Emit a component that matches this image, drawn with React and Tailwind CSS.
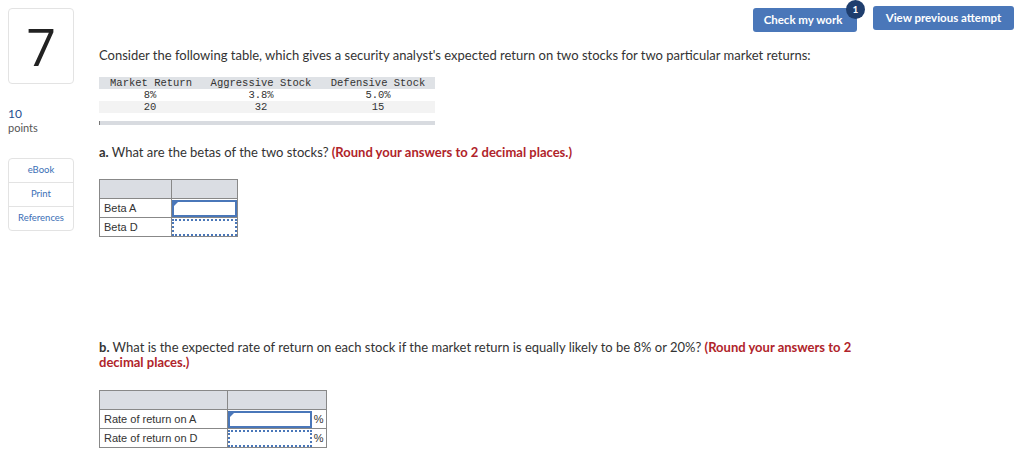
import React from "react";

const sans = { fontFamily: "Lato, 'Open Sans', sans-serif" };

export default function App() {
  return (
    <div className="relative w-[1024px] h-[458px] bg-white text-[#333]" style={sans}>
      {/* Top buttons */}
      <div className="absolute top-[6px] right-[10px] flex gap-[16px]">
        <div className="relative">
          <button className="h-[24px] w-[104px] pr-[4px] rounded-[3px] bg-[#4a77b9] text-white text-[11.5px] font-bold">Check my work</button>
          <span className="absolute -top-[6px] -right-[8px] w-[19px] h-[19px] rounded-full bg-[#1f3e6e] text-white text-[10px] font-bold flex items-center justify-center">1</span>
        </div>
        <button className="h-[24px] w-[141px] rounded-[3px] bg-[#4a77b9] text-white text-[11.5px] font-bold">View previous attempt</button>
      </div>

      <div className="flex pt-[8px] pl-[8px]">
        {/* Left sidebar */}
        <div className="w-[66px] flex flex-col">
          <div className="h-[76px] rounded-[4px] border border-[#e3e3e3] flex items-center justify-center">
            <span className="text-[52px] leading-none text-[#222]" style={{ fontFamily: "'Open Sans', sans-serif" }}>7</span>
          </div>
          <div className="mt-[22px] text-[12px] leading-[15px] text-[#1f4f8f]">10</div>
          <div className="text-[11px] leading-[14px] text-[#555]">points</div>
          <div className="mt-[23px] rounded-[4px] border border-[#e3e3e3] flex flex-col text-[9.5px] text-[#3b6fb6]">
            <div className="h-[24px] flex items-center justify-center border-b border-[#e3e3e3]">eBook</div>
            <div className="h-[24px] flex items-center justify-center border-b border-[#e3e3e3]">Print</div>
            <div className="h-[23px] flex items-center justify-center">References</div>
          </div>
        </div>

        {/* Main */}
        <div className="ml-[25px] flex-1">
          <p className="mt-[39px] text-[13px] leading-[16px] text-[#333]">
            Consider the following table, which gives a security analyst's expected return on two stocks for two particular market returns:
          </p>

          <div className="mt-[14px] w-[336px]" style={{ fontFamily: "'Liberation Mono', monospace" }}>
            <div className="grid grid-cols-[102px_120px_114px] auto-rows-[12px] text-[10.5px] leading-[12px] text-[#333]">
              <div className="bg-[#dfe2e6] text-center pl-[2px]">Market Return</div>
              <div className="bg-[#dfe2e6] text-center">Aggressive Stock</div>
              <div className="bg-[#dfe2e6] text-center">Defensive Stock</div>
              <div className="text-center">8%</div>
              <div className="text-center">3.8%</div>
              <div className="text-center">5.0%</div>
              <div className="text-center bg-[#f3f3f3]">20</div>
              <div className="text-center bg-[#f3f3f3]">32</div>
              <div className="text-center bg-[#f3f3f3]">15</div>
            </div>
            <div className="mt-[8px] h-[4px] bg-[#d8dbe0] border-l border-[#777]"></div>
          </div>

          <p className="mt-[19px] text-[13px] leading-[16px]">
            <b className="font-bold">a.</b> What are the betas of the two stocks?{" "}
            <span className="font-bold text-[#b0242a]">(Round your answers to 2 decimal places.)</span>
          </p>

          <table className="mt-[19px] border-collapse text-[11px]" style={{ fontFamily: "'Liberation Sans', Arial, sans-serif" }}>
            <tbody>
              <tr className="h-[19px]">
                <td className="w-[72px] bg-[#dadde3] border border-[#888]"></td>
                <td className="w-[66px] bg-[#dadde3] border border-[#888]"></td>
              </tr>
              <tr className="h-[19px]">
                <td className="border border-[#888] px-[4px] leading-none">Beta A</td>
                <td className="p-0 border border-[#888]">
                  <div className="relative h-[17px] border-2 border-[#4a77b9]">
                    <span className="absolute top-0 left-0 w-0 h-0 border-t-[4px] border-t-[#4a77b9] border-r-[4px] border-r-transparent"></span>
                  </div>
                </td>
              </tr>
              <tr className="h-[19px]">
                <td className="border border-[#888] px-[4px] leading-none">Beta D</td>
                <td className="p-0 border border-[#888]">
                  <div className="h-[17px] border-2 border-dotted border-[#4a77b9]"></div>
                </td>
              </tr>
            </tbody>
          </table>

          <p className="mt-[103px] text-[13px] leading-[15px] w-[765px]">
            <b className="font-bold">b.</b> What is the expected rate of return on each stock if the market return is equally likely to be 8% or 20%?{" "}
            <span className="font-bold text-[#b0242a]">(Round your answers to 2 decimal places.)</span>
          </p>

          <table className="mt-[20px] border-collapse text-[11px]" style={{ fontFamily: "'Liberation Sans', Arial, sans-serif" }}>
            <tbody>
              <tr className="h-[19px]">
                <td className="w-[128px] bg-[#dadde3] border border-[#888]"></td>
                <td className="w-[84px] bg-[#dadde3] border border-[#888]" colSpan={2}></td>
              </tr>
              <tr className="h-[19px]">
                <td className="border border-[#888] px-[4px] leading-none">Rate of return on A</td>
                <td className="p-0 border-y border-l border-[#888]">
                  <div className="relative h-[17px] w-[84px] border-2 border-[#4a77b9]">
                    <span className="absolute top-0 left-0 w-0 h-0 border-t-[4px] border-t-[#4a77b9] border-r-[4px] border-r-transparent"></span>
                  </div>
                </td>
                <td className="w-[14px] border-y border-r border-[#888] text-center leading-none">%</td>
              </tr>
              <tr className="h-[19px]">
                <td className="border border-[#888] px-[4px] leading-none">Rate of return on D</td>
                <td className="p-0 border-y border-l border-[#888]">
                  <div className="h-[17px] w-[84px] border-2 border-dotted border-[#4a77b9]"></div>
                </td>
                <td className="w-[14px] border-y border-r border-[#888] text-center leading-none">%</td>
              </tr>
            </tbody>
          </table>
        </div>
      </div>
    </div>
  );
}
